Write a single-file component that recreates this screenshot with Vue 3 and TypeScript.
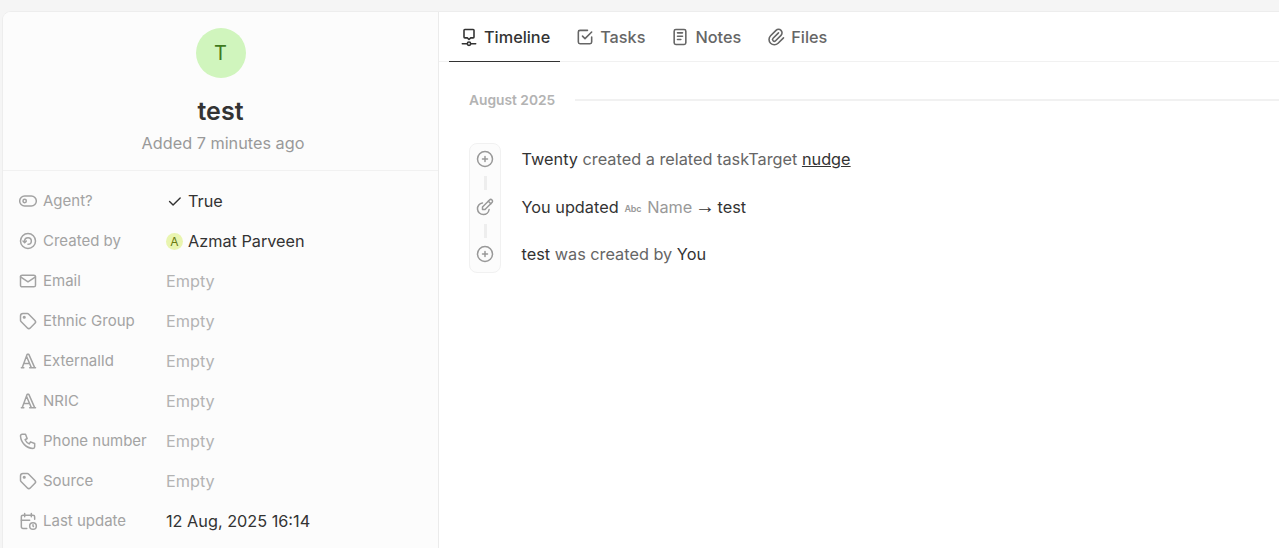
<script setup lang="ts">
interface Field { key: string; label: string; icon: string; value?: string; kind?: string }
const fields: Field[] = [
  { key: 'agent', label: 'Agent?', icon: 'toggle', value: 'True', kind: 'check' },
  { key: 'created', label: 'Created by', icon: 'sa', value: 'Azmat Parveen', kind: 'person' },
  { key: 'email', label: 'Email', icon: 'mail' },
  { key: 'ethnic', label: 'Ethnic Group', icon: 'tag' },
  { key: 'external', label: 'ExternalId', icon: 'text' },
  { key: 'nric', label: 'NRIC', icon: 'text' },
  { key: 'phone', label: 'Phone number', icon: 'phone' },
  { key: 'source', label: 'Source', icon: 'tag' },
  { key: 'update', label: 'Last update', icon: 'calendar', value: '12 Aug, 2025 16:14', kind: 'plain' },
]
</script>

<template>
  <div class="page">
    <div class="card">
      <aside class="side">
        <header class="head">
          <div class="avatar">T</div>
          <h1 class="title">test</h1>
          <p class="sub">Added 7 minutes ago</p>
        </header>
        <div class="fields">
          <div v-for="f in fields" :key="f.key" class="row">
            <div class="label">
              <svg class="ico" viewBox="0 0 24 24">
                <template v-if="f.icon === 'toggle'">
                  <circle cx="8" cy="12" r="2" />
                  <rect x="2" y="6" width="20" height="12" rx="6" />
                </template>
                <template v-else-if="f.icon === 'sa'">
                  <circle cx="12" cy="12" r="9" />
                  <path d="M12 16a4 4 0 1 0-4-4v1" />
                  <path d="M6 12l2 2 2-2" />
                </template>
                <template v-else-if="f.icon === 'mail'">
                  <path d="M3 7a2 2 0 0 1 2-2h14a2 2 0 0 1 2 2v10a2 2 0 0 1-2 2H5a2 2 0 0 1-2-2V7z" />
                  <path d="M3 7l9 6 9-6" />
                </template>
                <template v-else-if="f.icon === 'tag'">
                  <circle cx="7.5" cy="7.5" r="1" />
                  <path d="M3 6v5.172a2 2 0 0 0 .586 1.414l7.71 7.71a2.41 2.41 0 0 0 3.408 0l5.592-5.592a2.41 2.41 0 0 0 0-3.408l-7.71-7.71A2 2 0 0 0 11.172 3H6a3 3 0 0 0-3 3z" />
                </template>
                <template v-else-if="f.icon === 'text'">
                  <path d="M4 20h3M14 20h7M6.9 15h6.9M10.2 6.3L16 20M5 20l6-16h2l7 16" />
                </template>
                <template v-else-if="f.icon === 'phone'">
                  <path d="M5 4h4l2 5-2.5 1.5a11 11 0 0 0 5 5l1.5-2.5 5 2v4a2 2 0 0 1-2 2A16 16 0 0 1 3 6a2 2 0 0 1 2-2" />
                </template>
                <template v-else>
                  <path d="M10.5 21H6a2 2 0 0 1-2-2V7a2 2 0 0 1 2-2h12a2 2 0 0 1 2 2v3" />
                  <path d="M16 3v4M8 3v4M4 11h10" />
                  <circle cx="18" cy="18" r="4" />
                  <path d="M18 16.5V18l.5.5" />
                </template>
              </svg>
              <span>{{ f.label }}</span>
            </div>
            <div v-if="f.kind === 'check'" class="val dark">
              <svg class="check" viewBox="0 0 24 24"><path d="M5 12l5 5L20 7" /></svg>
              <span>{{ f.value }}</span>
            </div>
            <div v-else-if="f.kind === 'person'" class="val dark">
              <span class="mini">A</span>
              <span>{{ f.value }}</span>
            </div>
            <div v-else-if="f.kind === 'plain'" class="val dark">{{ f.value }}</div>
            <div v-else class="val empty">Empty</div>
          </div>
        </div>
      </aside>

      <main class="main">
        <nav class="tabs">
          <div class="tab active">
            <svg class="tab-ico" viewBox="0 0 24 24">
              <circle cx="12" cy="20" r="2" />
              <path d="M10 20H4M14 20h6" />
              <path d="M12 15l-2-2H7a1 1 0 0 1-1-1V4a1 1 0 0 1 1-1h10a1 1 0 0 1 1 1v8a1 1 0 0 1-1 1h-3l-2 2z" />
            </svg>
            <span>Timeline</span>
          </div>
          <div class="tab">
            <svg class="tab-ico" viewBox="0 0 24 24">
              <path d="M9 11l3 3 8-8" />
              <path d="M20 12v6a2 2 0 0 1-2 2H6a2 2 0 0 1-2-2V6a2 2 0 0 1 2-2h9" />
            </svg>
            <span>Tasks</span>
          </div>
          <div class="tab">
            <svg class="tab-ico" viewBox="0 0 24 24">
              <rect x="5" y="3" width="14" height="18" rx="2" />
              <path d="M9 7h6M9 11h6M9 15h4" />
            </svg>
            <span>Notes</span>
          </div>
          <div class="tab">
            <svg class="tab-ico" viewBox="0 0 24 24">
              <path d="M15 7l-6.5 6.5a1.5 1.5 0 0 0 3 3L18 10a3 3 0 0 0-6-6l-6.5 6.5a4.5 4.5 0 0 0 9 9L21 13" />
            </svg>
            <span>Files</span>
          </div>
        </nav>

        <section class="content">
          <div class="month">
            <span class="month-text">August 2025</span>
            <span class="month-line"></span>
          </div>
          <div class="timeline">
            <div class="rail">
              <svg class="rail-ico" viewBox="0 0 24 24"><circle cx="12" cy="12" r="9" /><path d="M9 12h6M12 9v6" /></svg>
              <span class="rail-line"></span>
              <svg class="rail-ico" viewBox="0 0 24 24">
                <path d="M12 15l8.385-8.415a2.1 2.1 0 0 0-2.97-2.97L9 12v3h3z" />
                <path d="M16 5l3 3" />
                <path d="M9 7.07A7 7 0 0 0 10 21a7 7 0 0 0 6.929-6" />
              </svg>
              <span class="rail-line"></span>
              <svg class="rail-ico" viewBox="0 0 24 24"><circle cx="12" cy="12" r="9" /><path d="M9 12h6M12 9v6" /></svg>
            </div>
            <div class="events">
              <p class="event"><b>Twenty</b> created a related taskTarget <a class="link">nudge</a></p>
              <p class="event"><b>You updated</b><span class="abc">Abc</span><span class="name">Name</span> <span class="arrow">→</span> <b>test</b></p>
              <p class="event"><b>test</b> was created by <b>You</b></p>
            </div>
          </div>
        </section>
      </main>
    </div>
  </div>
</template>

<style>
html, body { margin: 0; background: #f5f5f5; overflow: hidden; }
</style>

<style scoped>
.page {
  height: 548px;
  box-sizing: border-box;
  padding: 12px 0 0 3px;
  background: #f5f5f5;
  font-family: Inter, "Liberation Sans", sans-serif;
  overflow: hidden;
}
.card {
  display: flex;
  height: 536px;
  background: #fff;
  border-radius: 8px 0 0 0;
  box-shadow: 0 0 0 1px #ededed;
  overflow: hidden;
}
.side {
  width: 435px;
  flex: none;
  background: #fcfcfc;
  border-right: 1px solid #ebebeb;
}
.head {
  height: 159px;
  box-sizing: border-box;
  padding-top: 16px;
  border-bottom: 1px solid #f1f1f1;
  display: flex;
  flex-direction: column;
  align-items: center;
}
.avatar {
  width: 50px;
  height: 50px;
  border-radius: 50%;
  background: #d0f5bd;
  color: #3f7a1e;
  font-size: 20px;
  line-height: 50px;
  text-align: center;
}
.title {
  margin: 17px 0 0;
  font-size: 25px;
  line-height: 32px;
  font-weight: 600;
  color: #333;
}
.sub {
  margin: 4px 0 0 5px;
  font-size: 16.25px;
  line-height: 24px;
  color: #999;
}
.fields { padding-top: 10px; }
.row {
  display: flex;
  align-items: center;
  height: 40px;
  padding-left: 15px;
}
.label {
  width: 148px;
  flex: none;
  display: flex;
  align-items: center;
  gap: 5px;
  font-size: 15px;
  color: #a3a3a3;
  margin-top: -1px;
}
.ico {
  width: 20px;
  height: 20px;
  flex: none;
  fill: none;
  stroke: #a3a3a3;
  stroke-width: 1.8;
  stroke-linecap: round;
  stroke-linejoin: round;
}
.val {
  display: flex;
  align-items: center;
  font-size: 16.25px;
  line-height: 24px;
}
.dark { color: #333; }
.empty { color: #b3b3b3; }
.check {
  width: 17px;
  height: 17px;
  margin-right: 5px;
  fill: none;
  stroke: #333;
  stroke-width: 2;
  stroke-linecap: round;
  stroke-linejoin: round;
}
.mini {
  width: 17px;
  height: 17px;
  border-radius: 50%;
  background: #e9f5b0;
  color: #6a7a10;
  font-size: 12px;
  line-height: 17px;
  text-align: center;
  margin-right: 5px;
}
.main {
  flex: 1;
  min-width: 0;
}
.tabs {
  display: flex;
  height: 50px;
  box-sizing: border-box;
  padding-left: 10px;
  border-bottom: 1px solid #f1f1f1;
}
.tab {
  display: flex;
  align-items: center;
  gap: 5px;
  padding: 0 10px;
  margin-right: 5px;
  height: 50px;
  box-sizing: border-box;
  font-size: 16.25px;
  font-weight: 500;
  color: #666;
}
.tab.active {
  color: #333;
  border-bottom: 1px solid #333;
}
.tab-ico {
  width: 20px;
  height: 20px;
  flex: none;
  fill: none;
  stroke: currentColor;
  stroke-width: 1.9;
  stroke-linecap: round;
  stroke-linejoin: round;
}
.content { padding: 28px 0 0 30px; }
.month {
  display: flex;
  align-items: center;
  gap: 20px;
  height: 20px;
}
.month-text {
  font-size: 13.75px;
  font-weight: 600;
  color: #b3b3b3;
  white-space: nowrap;
}
.month-line {
  flex: 1;
  height: 2px;
  background: #f1f1f1;
}
.timeline {
  display: flex;
  margin-top: 33px;
}
.rail {
  width: 32px;
  height: 130px;
  box-sizing: border-box;
  border: 1px solid #f1f1f1;
  border-radius: 8px;
  background: #fcfcfc;
  display: flex;
  flex-direction: column;
  align-items: center;
  padding-top: 5px;
}
.rail-ico {
  width: 20px;
  height: 20px;
  flex: none;
  fill: none;
  stroke: #999;
  stroke-width: 1.8;
  stroke-linecap: round;
  stroke-linejoin: round;
}
.rail-line {
  width: 3px;
  height: 14px;
  margin: 7px 0 6.5px;
  background: #eeeeee;
}
.events { margin-left: 20.5px; }
.event {
  margin: 0;
  height: 47.5px;
  padding-top: 4px;
  box-sizing: border-box;
  font-size: 16.3px;
  line-height: 24px;
  color: #666;
  white-space: nowrap;
}
.event b { font-weight: 400; color: #333; }
.link { color: #333; text-decoration: underline; }
.abc {
  display: inline-block;
  margin: 0 6px 0 6px;
  font-size: 9px;
  color: #999;
  font-weight: 600;
  letter-spacing: -0.3px;
  vertical-align: 1px;
}
.name { color: #999; }
.arrow {
  font-family: "Liberation Sans", sans-serif;
  font-size: 20px;
  line-height: 0;
  margin: 0 -2px;
  color: #333;
}
</style>
